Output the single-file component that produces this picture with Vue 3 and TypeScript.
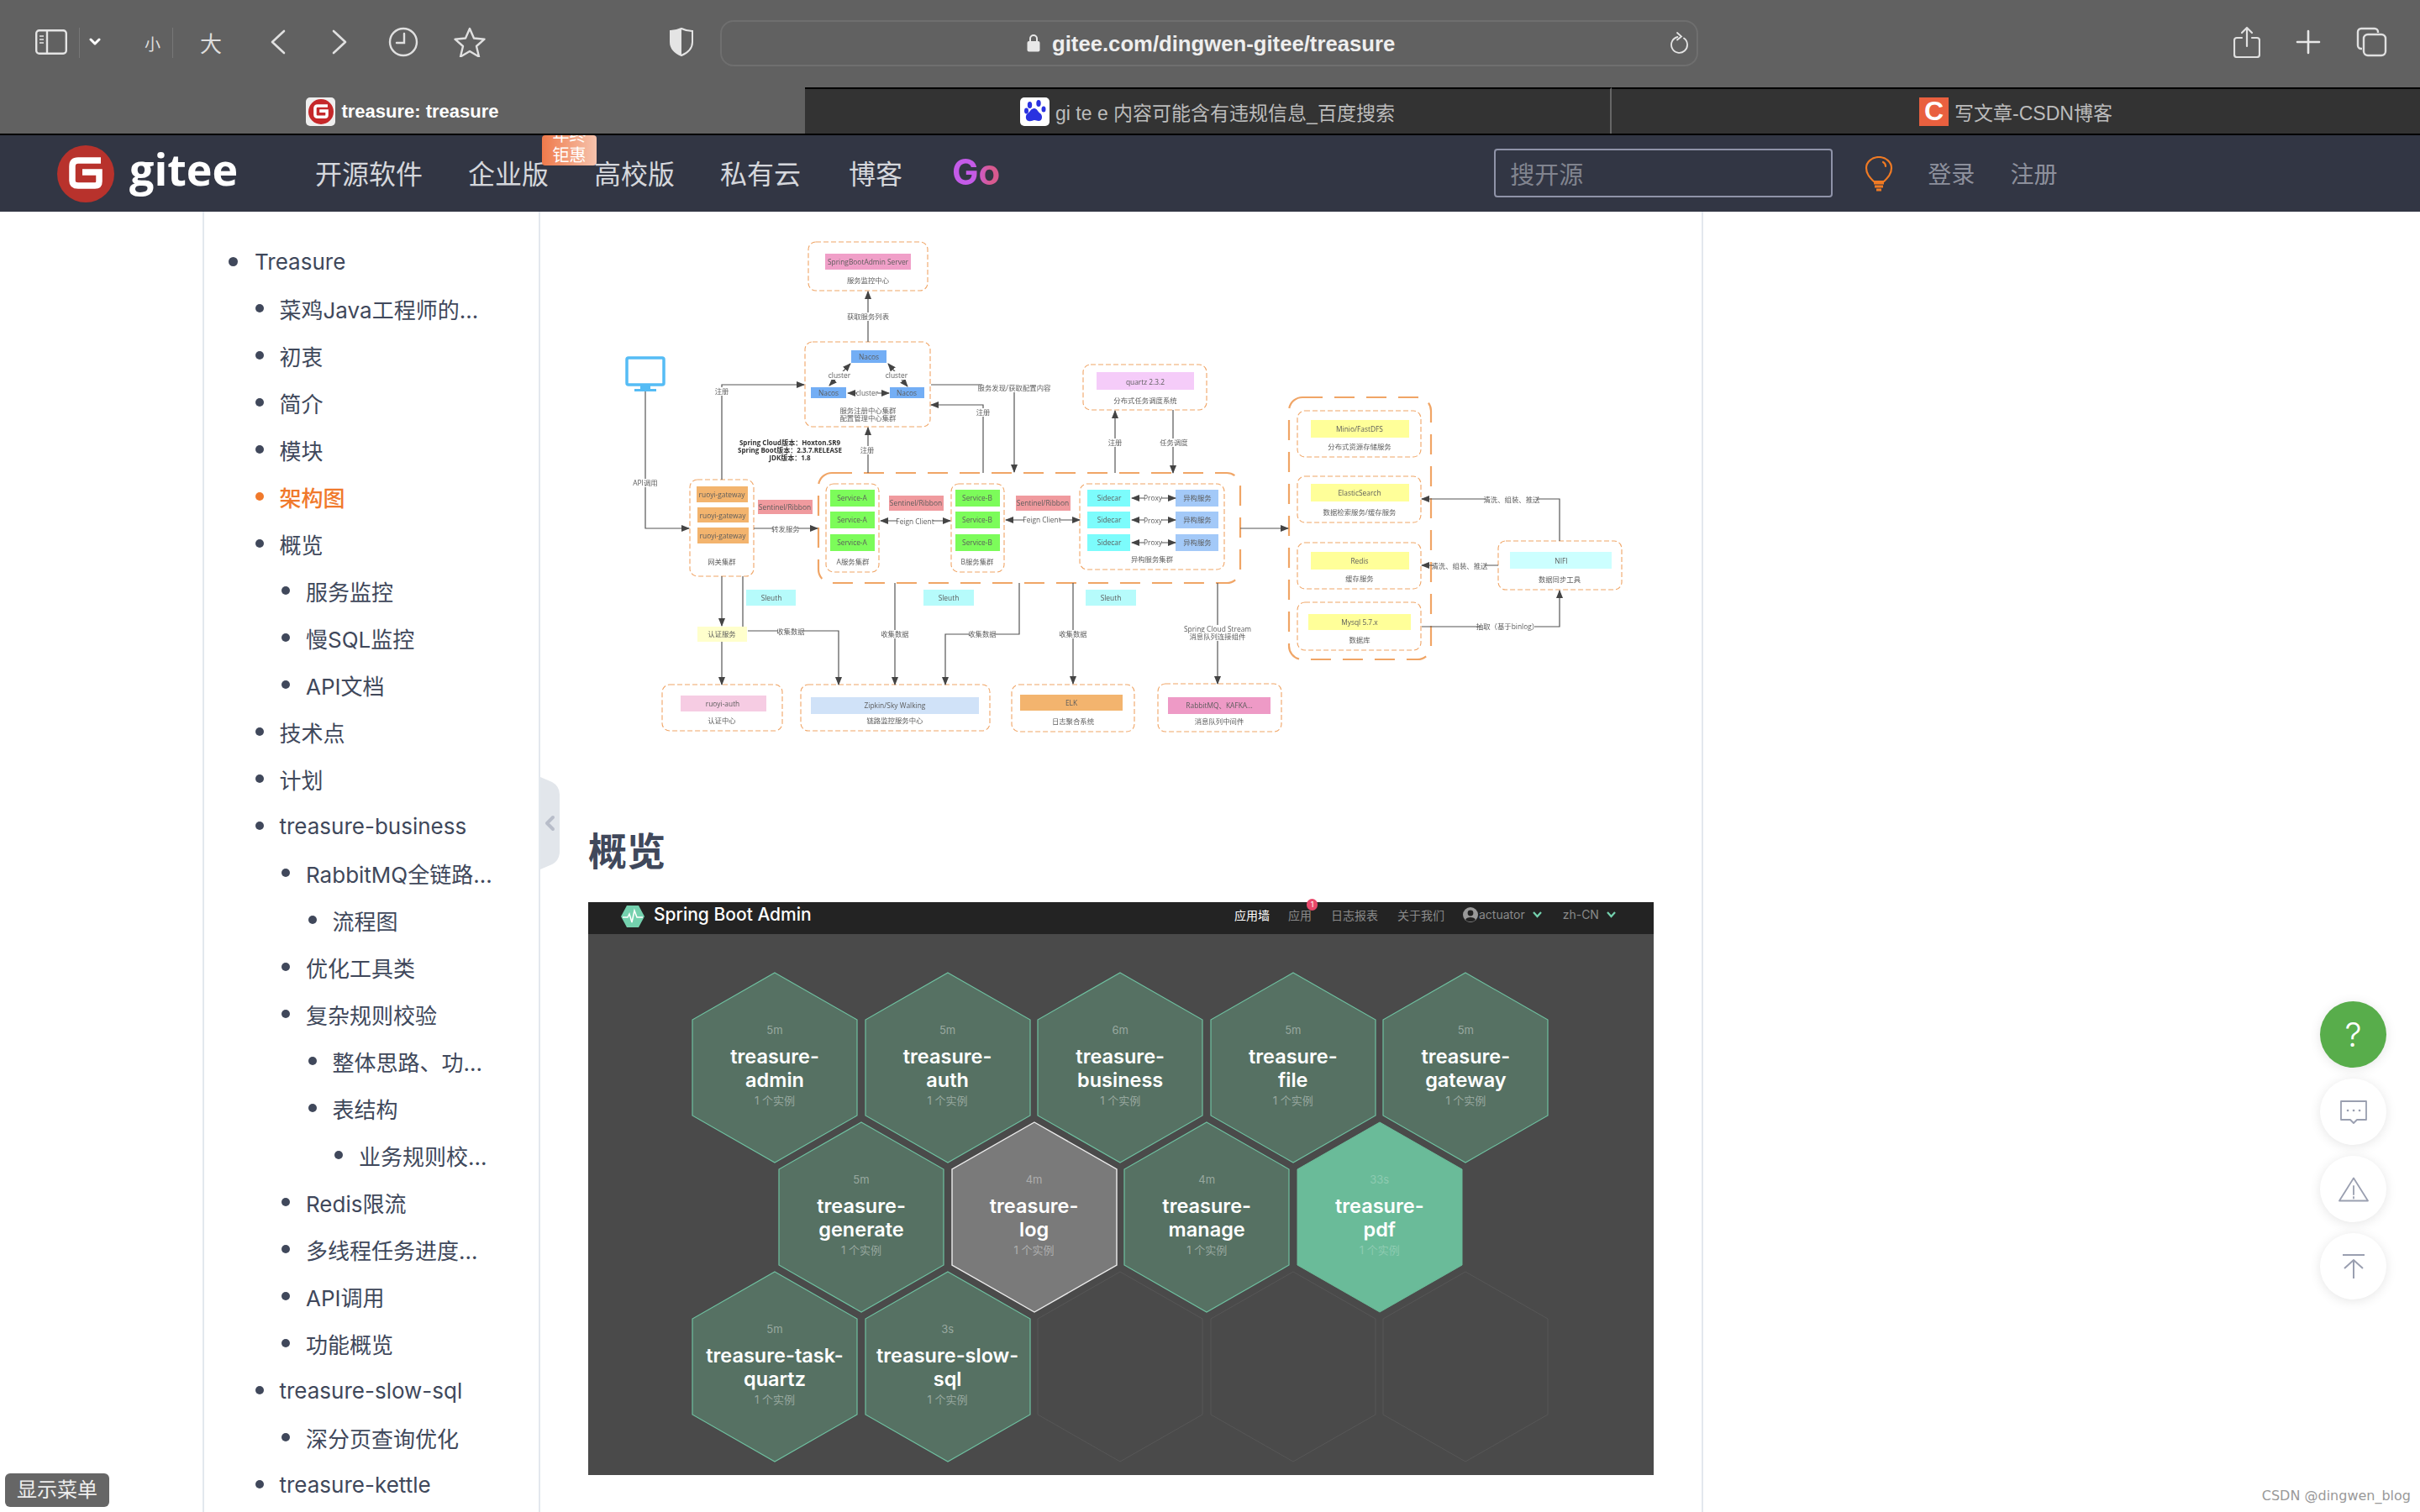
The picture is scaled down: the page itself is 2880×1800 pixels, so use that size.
<template>
  <div class="screen">
    <div class="toolbar">
      <svg class="ico" style="margin-left: 42px" width="38" height="30" viewBox="0 0 38 30" fill="none" stroke="#e4e4e4" stroke-width="2.4">
        <rect x="1.2" y="1.2" width="35.6" height="27.6" rx="3.5" />
        <path d="M14 1v28" />
        <path d="M5 8h5M5 12h5M5 16h5" stroke-width="1.6" />
      </svg>
      <span class="sep" style="margin-left: 14px"></span>
      <svg class="ico" style="margin-left: 11px" width="14" height="10" viewBox="0 0 14 10" fill="none" stroke="#fff" stroke-width="3" stroke-linecap="round" stroke-linejoin="round">
        <path d="M2 2l5 5 5-5" />
      </svg>
      <span class="zoom-small">小</span>
      <span class="sep" style="margin-left: 13px"></span>
      <span class="zoom-big">大</span>
      <svg class="ico" style="margin-left: 58px" width="18" height="30" viewBox="0 0 18 30" fill="none" stroke="#e0e0e0" stroke-width="2.6" stroke-linecap="round" stroke-linejoin="round">
        <path d="M16 2L2 15l14 13" />
      </svg>
      <svg class="ico" style="margin-left: 55px" width="18" height="30" viewBox="0 0 18 30" fill="none" stroke="#e0e0e0" stroke-width="2.6" stroke-linecap="round" stroke-linejoin="round">
        <path d="M2 2l14 13L2 28" />
      </svg>
      <svg class="ico" style="margin-left: 49px" width="36" height="36" viewBox="0 0 36 36" fill="none" stroke="#e0e0e0" stroke-width="2.4">
        <circle cx="18" cy="18" r="16" />
        <path d="M19 8v11h-9" stroke-linecap="round" />
      </svg>
      <svg class="ico" style="margin-left: 42px" width="38" height="36" viewBox="0 0 38 36" fill="none" stroke="#e0e0e0" stroke-width="2.4" stroke-linejoin="round">
        <path d="M19 2l5 11.5 12.5 1.2-9.5 8.3 3 12.5L19 29l-11 6.5 3-12.5-9.5-8.3L14 13.5z" />
      </svg>
      <svg class="ico" style="margin-left: 219px" width="28" height="34" viewBox="0 0 28 34">
        <path d="M14 1C10 3 5 4 1 4v13c0 8 6 13 13 16 7-3 13-8 13-16V4c-4 0-9-1-13-3z" fill="none" stroke="#e4e4e4" stroke-width="2" />
        <path d="M14 1C18 3 23 4 27 4v13c0 8-6 13-13 16z" fill="#e4e4e4" transform="matrix(-1 0 0 1 28 0)" />
      </svg>
      <div class="address">
        <svg class="lock" width="16" height="22" viewBox="0 0 16 22">
          <path d="M4 9V6a4 4 0 018 0v3" fill="none" stroke="#e8e8e8" stroke-width="2" />
          <rect x="0.5" y="9" width="15" height="12.5" rx="2" fill="#e8e8e8" />
        </svg>
        <span class="url">gitee.com/dingwen-gitee/treasure</span>
        <svg class="reload" width="23" height="26" viewBox="0 0 23 26" fill="none" stroke="#e4e4e4" stroke-width="1.8" stroke-linecap="round">
          <path d="M18 7.5A9.5 9.5 0 1 1 10.5 6" />
          <path d="M10 1l5 4.5-5 4" />
        </svg>
      </div>
      <svg class="ico" style="margin-left: 637px" width="32" height="38" viewBox="0 0 32 38" fill="none" stroke="#e0e0e0" stroke-width="2.2" stroke-linecap="round" stroke-linejoin="round">
        <path d="M10 14H4a3 3 0 00-3 3v17a3 3 0 003 3h24a3 3 0 003-3V17a3 3 0 00-3-3h-6" />
        <path d="M16 24V2M10 8l6-6 6 6" />
      </svg>
      <svg class="ico" style="margin-left: 42px" width="30" height="30" viewBox="0 0 30 30" stroke="#e8e8e8" stroke-width="2.6" stroke-linecap="round">
        <path d="M15 2v26M2 15h26" />
      </svg>
      <svg class="ico" style="margin-left: 42px" width="37" height="36" viewBox="0 0 37 36" fill="none" stroke="#e0e0e0" stroke-width="2.4">
        <path d="M7 26H6a4 4 0 01-4-4V6a4 4 0 014-4h16a4 4 0 014 4v1" />
        <rect x="9" y="9" width="26" height="25" rx="5" />
      </svg>
    </div>

    <div class="tabs">
      <div class="tab tab-active">
        <span class="fav fav-gitee">
          <svg width="30" height="30" viewBox="0 0 68 68">
            <circle cx="34" cy="34" r="34" fill="#c5282a" />
            <path d="M52 18H25q-7 0-7 7v17q0 6 7 6h20q5 0 5-5V32H30" fill="none" stroke="#fff" stroke-width="8" />
          </svg>
        </span>
        <span>treasure: treasure</span>
      </div>
      <div class="tab">
        <span class="fav fav-baidu">
          <svg width="30" height="30" viewBox="0 0 30 30" fill="#2a32e0">
            <ellipse cx="8.5" cy="7" rx="2.7" ry="4" />
            <ellipse cx="19" cy="5" rx="2.7" ry="4" />
            <ellipse cx="4.5" cy="14" rx="2.5" ry="3.4" />
            <ellipse cx="25" cy="12" rx="2.5" ry="3.6" />
            <path d="M14 11c3 0 4 4 7 6 3 2 3 9-2 9-2 0-3-1-5-1s-4 2-7 1c-4-1-4-7-1-9 3-2 4-6 8-6z" />
          </svg>
        </span>
        <span>gi te e 内容可能含有违规信息_百度搜索</span>
      </div>
      <div class="tab tab-last">
        <span class="fav fav-csdn">C</span>
        <span>写文章-CSDN博客</span>
      </div>
    </div>

    <header class="site-header">
      <svg class="logo" width="68" height="68" viewBox="0 0 68 68">
        <circle cx="34" cy="34" r="34" fill="#b8322c" />
        <path d="M52 18H25q-7 0-7 7v17q0 6 7 6h20q5 0 5-5V32H30" fill="none" stroke="#fff" stroke-width="7.5" />
      </svg>
      <span class="wordmark">gitee</span>
      <nav class="site-nav">
        <a>开源软件</a>
        <a class="has-badge">企业版<span class="promo"><span>年终<br />钜惠</span></span></a>
        <a>高校版</a>
        <a>私有云</a>
        <a class="blog">博客</a>
        <a class="go">Go</a>
      </nav>
      <div class="search">搜开源</div>
      <svg class="bulb" width="34" height="42" viewBox="0 0 34 42" fill="none" stroke="#ef7a24" stroke-width="2.2">
        <path d="M11 30C6 25 2 21 2 14a15 13 0 0130 0c0 7-4 11-9 16z" />
        <path d="M22 7c2 1 3 3 3 5" stroke-linecap="round" />
        <path d="M11 32h12M12 36h10M14 40h6" stroke-width="3" />
      </svg>
      <a class="auth-link" style="margin-left: 41px">登录</a>
      <a class="auth-link" style="margin-left: 42px">注册</a>
    </header>

    <div class="body-row">
      <aside class="toc">
        <ul>
          <li
            v-for="item in toc"
            :key="item.text"
            :class="{ current: item.current }"
            :style="{ paddingLeft: item.level * 31.5 + 'px' }"
          >
            <span class="dot" :class="{ 'dot-top': item.level === 0 }"></span>
            <span>{{ item.text }}</span>
          </li>
        </ul>
      </aside>

      <main class="article">
        <svg class="diagram" width="1268" height="620" viewBox="700 270 1268 620">
          <defs>
            <marker id="arr" markerWidth="10" markerHeight="8" refX="9" refY="4" orient="auto-start-reverse" markerUnits="userSpaceOnUse">
              <path d="M0 0L10 4 0 8z" fill="#444" />
            </marker>
          </defs>
          <rect
            v-for="b in dashBoxes"
            :key="'d' + b.x + b.y"
            :x="b.x" :y="b.y" :width="b.w" :height="b.h" :rx="b.heavy ? 16 : 9"
            fill="none"
            stroke="#f0a566"
            :stroke-width="b.heavy ? 2.2 : 1.1"
            :stroke-dasharray="b.heavy ? '24 14' : '6 3'"
          />
          <rect
            v-for="b in fills"
            :key="'f' + b.x + b.y"
            :x="b.x" :y="b.y" :width="b.w" :height="b.h" :fill="b.c"
          />
          <path
            v-for="l in lines"
            :key="l.d"
            :d="l.d"
            fill="none"
            stroke="#555"
            stroke-width="1.2"
            :marker-end="l.end === false ? undefined : 'url(#arr)'"
            :marker-start="l.both ? 'url(#arr)' : undefined"
          />
          <rect x="746" y="426" width="44" height="32" rx="2" fill="#fff" stroke="#55bcf5" stroke-width="3.5" />
          <path d="M762 459h12v4h7v3h-26v-3h7z" fill="#55bcf5" />
          <g v-for="t in labels" :key="t.s + t.x + t.y">
            <rect v-if="t.bg" :x="t.x - t.bg / 2" :y="t.y - 5" :width="t.bg" height="10" fill="#fff" />
            <text :x="t.x" :y="t.y + 3" class="dt" :class="{ 'dt-bold': t.bold }">{{ t.s }}</text>
          </g>
        </svg>

        <h2 class="heading">概览</h2>

        <div class="sba">
          <div class="sba-bar">
            <svg class="sba-logo" width="28" height="26" viewBox="0 0 28 26">
              <path d="M7 0h14l7 13-7 13H7L0 13z" fill="#74d1ae" />
              <path d="M2 14h6l2-4 3 10 3-14 3 8h7" fill="none" stroke="#fff" stroke-width="1.5" />
            </svg>
            <span class="sba-title">Spring Boot Admin</span>
            <span class="sba-link sba-link-on" style="margin-left: 512px">应用墙</span>
            <span class="sba-link" style="margin-left: 22px">应用<span class="sba-badge">1</span></span>
            <span class="sba-link" style="margin-left: 23px">日志报表</span>
            <span class="sba-link" style="margin-left: 23px">关于我们</span>
            <svg class="sba-user" width="18" height="18" viewBox="0 0 18 18">
              <circle cx="9" cy="9" r="9" fill="#999" />
              <circle cx="9" cy="7" r="3.4" fill="#222" />
              <path d="M3 15c1-4 11-4 12 0-3 3-9 3-12 0z" fill="#222" />
            </svg>
            <span class="sba-link">actuator</span>
            <svg class="sba-chev" width="11" height="8" viewBox="0 0 11 8" fill="none" stroke="#74d1ae" stroke-width="2.2"><path d="M1 1l4.5 5L10 1" /></svg>
            <span class="sba-link" style="margin-left: 25px">zh-CN</span>
            <svg class="sba-chev" width="11" height="8" viewBox="0 0 11 8" fill="none" stroke="#74d1ae" stroke-width="2.2"><path d="M1 1l4.5 5L10 1" /></svg>
          </div>
          <div class="wall">
            <div v-for="(row, r) in wall" :key="r" class="wall-row" :class="{ 'wall-row-shift': r === 1 }">
              <div v-for="(h, i) in row" :key="i" class="hex" :class="h.kind">
                <svg class="hex-shape" width="198" height="228" viewBox="-1 -1 198 228">
                  <polygon points="98,0 196,56 196,170 98,226 0,170 0,56" />
                </svg>
                <template v-if="h.name">
                  <span class="hex-age">{{ h.age }}</span>
                  <span class="hex-name">{{ h.name[0] }}<br />{{ h.name[1] }}</span>
                  <span class="hex-count">1 个实例</span>
                </template>
              </div>
            </div>
          </div>
        </div>
      </main>
      <div class="right-rule"></div>
    </div>

    <svg class="toc-handle" width="24" height="110" viewBox="0 0 24 110">
      <path d="M0 0l14 6q9 5 9 15v68q0 10-9 15l-14 6z" fill="#e2e6eb" />
      <path d="M15 48l-7 7 7 7" fill="none" stroke="#b8bdc9" stroke-width="4" stroke-linejoin="round" stroke-linecap="round" />
    </svg>

    <div class="float-tools">
      <div class="tool tool-help">?</div>
      <div class="tool">
        <svg width="34" height="28" viewBox="0 0 34 28" fill="none" stroke="#9a9fb0" stroke-width="1.8">
          <path d="M2 1h30v22H21l-4 4-4-4H2z" stroke-linejoin="round" />
          <path d="M10 12h.1M17 12h.1M24 12h.1" stroke-width="2.6" stroke-linecap="round" />
        </svg>
      </div>
      <div class="tool">
        <svg width="36" height="30" viewBox="0 0 36 30" fill="none" stroke="#9a9fb0" stroke-width="1.8" stroke-linejoin="round">
          <path d="M18 1.5L35 28.5H1z" />
          <path d="M18 11v10M18 24v1.5" stroke-linecap="round" />
        </svg>
      </div>
      <div class="tool">
        <svg width="28" height="30" viewBox="0 0 28 30" fill="none" stroke="#9a9fb0" stroke-width="2">
          <path d="M1 1h26M14 29V7M3 17L14 7l11 10" />
        </svg>
      </div>
    </div>

    <div class="show-menu">显示菜单</div>
    <div class="watermark">CSDN @dingwen_blog</div>
  </div>
</template>

<script setup lang="ts">
interface TocItem {
  text: string;
  level: number;
  current?: boolean;
}

interface Hex {
  kind: string;
  name?: [string, string];
  age?: string;
}

interface Rect {
  x: number;
  y: number;
  w: number;
  h: number;
  c?: string;
  heavy?: boolean;
}

const toc: TocItem[] = [
  { text: "Treasure", level: 0 },
  { text: "菜鸡Java工程师的...", level: 1 },
  { text: "初衷", level: 1 },
  { text: "简介", level: 1 },
  { text: "模块", level: 1 },
  { text: "架构图", level: 1, current: true },
  { text: "概览", level: 1 },
  { text: "服务监控", level: 2 },
  { text: "慢SQL监控", level: 2 },
  { text: "API文档", level: 2 },
  { text: "技术点", level: 1 },
  { text: "计划", level: 1 },
  { text: "treasure-business", level: 1 },
  { text: "RabbitMQ全链路...", level: 2 },
  { text: "流程图", level: 3 },
  { text: "优化工具类", level: 2 },
  { text: "复杂规则校验", level: 2 },
  { text: "整体思路、功...", level: 3 },
  { text: "表结构", level: 3 },
  { text: "业务规则校...", level: 4 },
  { text: "Redis限流", level: 2 },
  { text: "多线程任务进度...", level: 2 },
  { text: "API调用", level: 2 },
  { text: "功能概览", level: 2 },
  { text: "treasure-slow-sql", level: 1 },
  { text: "深分页查询优化", level: 2 },
  { text: "treasure-kettle", level: 1 },
];

const up = "hex-up";
const wall: Hex[][] = [
  [
    { kind: up, name: ["treasure-", "admin"], age: "5m" },
    { kind: up, name: ["treasure-", "auth"], age: "5m" },
    { kind: up, name: ["treasure-", "business"], age: "6m" },
    { kind: up, name: ["treasure-", "file"], age: "5m" },
    { kind: up, name: ["treasure-", "gateway"], age: "5m" },
  ],
  [
    { kind: up, name: ["treasure-", "generate"], age: "5m" },
    { kind: "hex-hover", name: ["treasure-", "log"], age: "4m" },
    { kind: up, name: ["treasure-", "manage"], age: "4m" },
    { kind: "hex-new", name: ["treasure-", "pdf"], age: "33s" },
  ],
  [
    { kind: up, name: ["treasure-task-", "quartz"], age: "5m" },
    { kind: up, name: ["treasure-slow-", "sql"], age: "3s" },
    { kind: "hex-empty" },
    { kind: "hex-empty" },
    { kind: "hex-empty" },
  ],
];

const box = (x: number, y: number, x2: number, y2: number, heavy = false): Rect => ({
  x,
  y,
  w: x2 - x,
  h: y2 - y,
  heavy,
});

const dashBoxes: Rect[] = [
  box(962, 288, 1104, 346),
  box(958, 407, 1107, 508),
  box(1289, 434, 1436, 488),
  box(821, 571, 897, 686),
  box(974, 563, 1476, 694, true),
  box(983, 576, 1046, 681),
  box(1132, 576, 1195, 681),
  box(1285, 576, 1457, 678),
  box(788, 815, 931, 870),
  box(953, 815, 1178, 870),
  box(1204, 815, 1350, 871),
  box(1378, 814, 1525, 871),
  box(1534, 473, 1703, 785, true),
  box(1544, 489, 1691, 544),
  box(1544, 567, 1691, 622),
  box(1544, 646, 1691, 701),
  box(1544, 717, 1691, 774),
  box(1783, 644, 1930, 702),
];

const fill = (c: string, x: number, y: number, x2: number, y2: number): Rect => ({
  c,
  x,
  y,
  w: x2 - x,
  h: y2 - y,
});

const rowYs: [number, number][] = [
  [583, 603],
  [609, 629],
  [636, 656],
];

const fills: Rect[] = [
  fill("#f09fc8", 982, 302, 1084, 321),
  fill("#73aef5", 1013, 417, 1055, 432),
  fill("#73aef5", 965, 461, 1007, 474),
  fill("#73aef5", 1059, 461, 1100, 474),
  fill("#f5ccf9", 1305, 443, 1421, 464),
  fill("#f3b46e", 829, 579, 890, 598),
  fill("#f3b46e", 830, 604, 891, 622),
  fill("#f3b46e", 830, 628, 891, 647),
  fill("#f09a9e", 902, 595, 967, 612),
  fill("#f09a9e", 1058, 590, 1123, 608),
  fill("#f09a9e", 1209, 590, 1274, 608),
  ...rowYs.map(([a, b]) => fill("#7cfc5a", 988, a, 1041, b)),
  ...rowYs.map(([a, b]) => fill("#7cfc5a", 1137, a, 1190, b)),
  ...rowYs.map(([a, b]) => fill("#7cfcfc", 1294, a, 1345, b)),
  ...rowYs.map(([a, b]) => fill("#a3c9f8", 1399, a, 1450, b)),
  fill("#b6fbfb", 888, 702, 947, 721),
  fill("#b6fbfb", 1099, 702, 1159, 721),
  fill("#b6fbfb", 1292, 702, 1352, 721),
  fill("#ffffcc", 830, 746, 889, 764),
  fill("#f6cce3", 810, 828, 912, 847),
  fill("#d0e2f8", 965, 830, 1165, 850),
  fill("#f3b46e", 1214, 827, 1336, 846),
  fill("#ee9ac6", 1390, 830, 1512, 850),
  fill("#ffff99", 1560, 500, 1677, 521),
  fill("#ffff99", 1560, 576, 1677, 597),
  fill("#ffff99", 1560, 657, 1677, 678),
  fill("#ffff99", 1557, 731, 1679, 750),
  fill("#ccffff", 1797, 657, 1918, 677),
];

const lines: { d: string; both?: boolean; end?: boolean }[] = [
  { d: "M768 466V629H820" },
  { d: "M859 571V458H957" },
  { d: "M1033 407V347" },
  { d: "M1033 563V509" },
  { d: "M1170 563V482H1108" },
  { d: "M1108 458H1207V562" },
  { d: "M1327 563V489" },
  { d: "M1396 488V563" },
  { d: "M897 629H973" },
  { d: "M1048 620H1131", both: true },
  { d: "M1197 619H1285", both: true },
  { d: "M1347 593H1399", both: true },
  { d: "M1347 619H1399", both: true },
  { d: "M1347 646H1399", both: true },
  { d: "M987 459L1012 433", both: true },
  { d: "M1057 433L1080 460", both: true },
  { d: "M1009 468H1058", both: true },
  { d: "M859 686V745" },
  { d: "M859 764V815" },
  { d: "M884 686V746", end: false },
  { d: "M890 751H998V815" },
  { d: "M1065 694V815" },
  { d: "M1213 694V755H1125V815" },
  { d: "M1277 694V814" },
  { d: "M1449 694V814" },
  { d: "M1476 629H1533" },
  { d: "M1856 644V594H1692" },
  { d: "M1783 673H1692" },
  { d: "M1692 746H1856V703" },
];

const t = (s: string, x: number, y: number, bg = 0, bold = false) => ({ s, x, y, bg, bold });

const labels = [
  t("SpringBootAdmin Server", 1033, 312),
  t("服务监控中心", 1033, 334),
  t("获取服务列表", 1033, 377, 44),
  t("Nacos", 1034, 425),
  t("Nacos", 986, 468),
  t("Nacos", 1079, 468),
  t("cluster", 999, 447, 24),
  t("cluster", 1067, 447, 24),
  t("cluster", 1032, 468, 24),
  t("服务注册中心集群", 1033, 489),
  t("配置管理中心集群", 1033, 498),
  t("注册", 859, 466, 16),
  t("服务发现/获取配置内容", 1207, 462, 76),
  t("注册", 1170, 491, 16),
  t("注册", 1032, 536, 16),
  t("注册", 1327, 527, 16),
  t("任务调度", 1397, 527, 30),
  t("quartz 2.3.2", 1363, 455),
  t("分布式任务调度系统", 1363, 477),
  t("Spring Cloud版本：Hoxton.SR9", 940, 527, 0, true),
  t("Spring Boot版本：2.3.7.RELEASE", 940, 536, 0, true),
  t("JDK版本：1.8", 940, 545, 0, true),
  t("API调用", 768, 575, 28),
  t("ruoyi-gateway", 859, 589),
  t("ruoyi-gateway", 860, 614),
  t("ruoyi-gateway", 860, 638),
  t("网关集群", 859, 669),
  t("Sentinel/Ribbon", 934, 604),
  t("Sentinel/Ribbon", 1090, 599),
  t("Sentinel/Ribbon", 1241, 599),
  t("转发服务", 935, 630, 30),
  t("Feign Client", 1089, 621, 42),
  t("Feign Client", 1240, 619, 42),
  t("Service-A", 1014, 593),
  t("Service-A", 1014, 619),
  t("Service-A", 1014, 646),
  t("A服务集群", 1015, 669),
  t("Service-B", 1163, 593),
  t("Service-B", 1163, 619),
  t("Service-B", 1163, 646),
  t("B服务集群", 1163, 669),
  t("Sidecar", 1320, 593),
  t("Sidecar", 1320, 619),
  t("Sidecar", 1320, 646),
  t("Proxy", 1372, 593, 20),
  t("Proxy", 1372, 620, 20),
  t("Proxy", 1372, 646, 20),
  t("异构服务", 1425, 593),
  t("异构服务", 1425, 619),
  t("异构服务", 1425, 646),
  t("异构服务集群", 1371, 666),
  t("Sleuth", 918, 712),
  t("Sleuth", 1129, 712),
  t("Sleuth", 1322, 712),
  t("认证服务", 859, 755),
  t("收集数据", 941, 752, 30),
  t("收集数据", 1065, 755, 30),
  t("收集数据", 1169, 755, 30),
  t("收集数据", 1277, 755, 30),
  t("Spring Cloud Stream", 1449, 749, 72),
  t("消息队列连接组件", 1449, 758, 60),
  t("ruoyi-auth", 860, 838),
  t("认证中心", 859, 858),
  t("Zipkin/Sky Walking", 1065, 840),
  t("链路监控服务中心", 1065, 858),
  t("ELK", 1275, 837),
  t("日志聚合系统", 1277, 859),
  t("RabbitMQ、KAFKA...", 1451, 840),
  t("消息队列中间件", 1451, 859),
  t("Minio/FastDFS", 1618, 511),
  t("分布式资源存储服务", 1618, 532),
  t("ElasticSearch", 1618, 587),
  t("数据检索服务/缓存服务", 1618, 610),
  t("Redis", 1618, 668),
  t("缓存服务", 1618, 689),
  t("Mysql 5.7.x", 1618, 741),
  t("数据库", 1618, 762),
  t("NIFI", 1858, 668),
  t("数据同步工具", 1856, 690),
  t("清洗、组装、推送", 1799, 595, 60),
  t("清洗、组装、推送", 1737, 674, 60),
  t("抽取（基于binlog）", 1794, 746, 64),
];
</script>

<style>
html,
body {
  margin: 0;
  background: #fff;
}
</style>

<style scoped>
.screen {
  position: relative;
  width: 2880px;
  height: 1800px;
  overflow: hidden;
  display: flex;
  flex-direction: column;
  font-family: Inter, "Noto Sans CJK SC", sans-serif;
  background: #fff;
}

.toolbar {
  height: 104px;
  flex: none;
  display: flex;
  align-items: center;
  background: #616161;
}

.ico {
  flex: none;
  position: relative;
  top: -2px;
}

.sep {
  width: 1px;
  height: 36px;
  background: #777;
  position: relative;
  top: -1px;
}

.zoom-small {
  margin-left: 52px;
  width: 20px;
  font-size: 19px;
  color: #ddd;
  position: relative;
  top: -1px;
}

.zoom-big {
  margin-left: 32px;
  width: 26px;
  font-size: 26px;
  color: #ddd;
  position: relative;
  top: -2px;
}

.address {
  margin-left: 32px;
  width: 1164px;
  height: 55px;
  box-sizing: border-box;
  border: 2px solid #6f6f6f;
  border-radius: 16px;
  display: flex;
  align-items: center;
  position: relative;
  top: -1px;
  flex: none;
}

.lock {
  margin-left: 363px;
  flex: none;
}

.url {
  margin-left: 14px;
  padding-top: 3px;
  font-family: "Liberation Sans", sans-serif;
  font-size: 25.7px;
  font-weight: 700;
  color: #eee;
  white-space: nowrap;
}

.reload {
  position: absolute;
  right: 10px;
  top: 12px;
}

.tabs {
  height: 57px;
  flex: none;
  display: flex;
  background: #333;
  box-sizing: border-box;
  border-bottom: 2px solid #000;
}

.tab {
  width: 960px;
  flex: none;
  display: flex;
  align-items: center;
  justify-content: center;
  gap: 7px;
  box-sizing: border-box;
  border-top: 2px solid #000;
  border-right: 2px solid #666;
  font-size: 23px;
  color: #bcbcbc;
  white-space: nowrap;
  font-family: "Liberation Sans", "Noto Sans CJK SC", sans-serif;
}

.tab-active {
  width: 958px;
  background: #616161;
  border-top-color: #616161;
  border-right: none;
  color: #fff;
  font-size: 22px;
  font-weight: 700;
}

.tab-last {
  flex: 1;
  border-right: none;
}

.fav {
  width: 35px;
  height: 34px;
  flex: none;
  display: flex;
  align-items: center;
  justify-content: center;
  border-radius: 5px;
}

.fav-gitee {
  background: #eee;
}

.fav-baidu {
  background: #fff;
}

.fav-csdn {
  background: #e9603f;
  border-radius: 0;
  color: #fff;
  font-size: 32px;
  font-weight: 700;
}

.site-header {
  height: 91px;
  flex: none;
  display: flex;
  align-items: center;
  background: #323644;
  padding-left: 68px;
}

.logo {
  flex: none;
}

.wordmark {
  margin-left: 18px;
  width: 129px;
  flex: none;
  font-family: "Open Sans", sans-serif;
  font-size: 52px;
  font-weight: 700;
  color: #fff;
  line-height: 1;
  position: relative;
  top: -6px;
}

.site-nav {
  margin-left: 92px;
  display: flex;
  gap: 54px;
  font-size: 32px;
  color: #d5d7dc;
  flex: none;
  position: relative;
  top: -2px;
}

.site-nav a {
  position: relative;
}

.blog {
  margin-left: 3px;
}

.promo {
  position: absolute;
  left: 88px;
  top: -21px;
  width: 65px;
  height: 36px;
  border-radius: 4px;
  overflow: hidden;
  background: linear-gradient(90deg, #ef7a4b, #f6c3ad);
  font-size: 20px;
  line-height: 24px;
  text-align: center;
  color: #fff;
  display: flex;
  align-items: flex-end;
  justify-content: center;
}

.promo span {
  flex: none;
}

.go {
  margin-left: 5px;
  font-size: 42px;
  font-weight: 700;
  line-height: 1;
  align-self: center;
  background: linear-gradient(90deg, #c45be8 45%, #d85a90 80%);
  -webkit-background-clip: text;
  background-clip: text;
  color: transparent;
}

.search {
  margin-left: 588px;
  width: 403px;
  height: 58px;
  flex: none;
  box-sizing: border-box;
  border: 2px solid #8f93a8;
  border-radius: 4px;
  padding-left: 17px;
  display: flex;
  align-items: center;
  font-size: 29px;
  color: #81848f;
  position: relative;
  top: -1px;
}

.bulb {
  margin-left: 38px;
  flex: none;
}

.auth-link {
  font-size: 28px;
  color: #8d909c;
  flex: none;
  position: relative;
  top: -1px;
}

.body-row {
  flex: 1;
  min-height: 0;
  display: flex;
  margin-left: 241px;
}

.toc {
  width: 402px;
  flex: none;
  box-sizing: border-box;
  border-left: 2px solid #e3e8ee;
  border-right: 2px solid #e3e8ee;
  padding: 31px 0 0 29px;
  overflow: hidden;
}

.toc ul {
  margin: 0;
  padding: 0;
  list-style: none;
}

.toc li {
  height: 56px;
  display: flex;
  align-items: center;
  gap: 19px;
  font-size: 26px;
  color: #40485b;
  white-space: nowrap;
}

.toc li.current {
  color: #f0792b;
  font-weight: 500;
}

.dot {
  width: 10px;
  height: 10px;
  border-radius: 50%;
  background: currentColor;
  flex: none;
}

.dot-top {
  width: 11px;
  height: 11px;
  margin-right: 1px;
}

.article {
  width: 1382px;
  flex: none;
  box-sizing: border-box;
  padding: 18px 0 0 57px;
}

.diagram {
  display: block;
  filter: blur(0.45px);
}

.dt {
  font-family: "Open Sans", "Noto Sans CJK SC", sans-serif;
  font-size: 8.4px;
  fill: #5c5c5c;
  text-anchor: middle;
}

.dt-bold {
  font-size: 8px;
  font-weight: 700;
  fill: #333;
}

.heading {
  margin: 92px 0 30px;
  height: 62px;
  line-height: 62px;
  font-size: 46px;
  font-weight: 700;
  color: #40485b;
}

.sba {
  width: 1268px;
  height: 682px;
  background: #4a4a4a;
  display: flex;
  flex-direction: column;
}

.sba-bar {
  height: 38px;
  flex: none;
  display: flex;
  align-items: center;
  background: #232323;
  padding: 0 0 9px 39px;
  box-sizing: border-box;
}

.sba-logo {
  flex: none;
  margin-top: 4px;
}

.sba-title {
  margin-left: 11px;
  width: 179px;
  font-size: 21px;
  font-weight: 500;
  color: #fff;
  white-space: nowrap;
  flex: none;
}

.sba-link {
  position: relative;
  font-size: 14px;
  color: #8a8a8a;
  white-space: nowrap;
  flex: none;
}

.sba-link-on {
  color: #fff;
}

.sba-badge {
  position: absolute;
  right: -7px;
  top: -9px;
  width: 13px;
  height: 14px;
  border-radius: 7px;
  background: #e8486a;
  color: #fff;
  font-size: 9px;
  line-height: 14px;
  text-align: center;
}

.sba-user {
  flex: none;
  margin: 0 1px 0 22px;
}

.sba-chev {
  flex: none;
  margin-left: 9px;
}

.wall {
  padding: 46px 0 0 124px;
  display: flex;
  flex-direction: column;
}

.wall-row {
  display: flex;
  gap: 9.6px;
  height: 178px;
}

.wall-row-shift {
  padding-left: 103px;
}

.hex {
  position: relative;
  width: 196px;
  height: 226px;
  flex: none;
  display: flex;
  flex-direction: column;
  align-items: center;
  justify-content: center;
  padding-bottom: 6px;
  box-sizing: border-box;
}

.hex-shape {
  position: absolute;
  left: -1px;
  top: -1px;
}

.hex-up .hex-shape polygon {
  fill: #567163;
  stroke: #6fc0a0;
  stroke-width: 1.2;
}

.hex-hover .hex-shape polygon {
  fill: #7a7a7a;
  stroke: #ececec;
  stroke-width: 1.4;
}

.hex-new .hex-shape polygon {
  fill: #6abb99;
  stroke: #6abb99;
}

.hex-empty .hex-shape polygon {
  fill: none;
  stroke: #575757;
  stroke-width: 1;
}

.hex-age,
.hex-name,
.hex-count {
  position: relative;
  text-align: center;
}

.hex-age {
  font-size: 13px;
  line-height: 18px;
  color: rgba(255, 255, 255, 0.4);
  margin-bottom: 9px;
}

.hex-name {
  font-size: 23.5px;
  font-weight: 600;
  line-height: 27.5px;
  color: #fff;
  white-space: nowrap;
}

.hex-count {
  font-size: 13px;
  line-height: 18px;
  margin-top: 2px;
  color: rgba(255, 255, 255, 0.4);
}

.hex-new .hex-age,
.hex-new .hex-count {
  color: rgba(255, 255, 255, 0.25);
}

.right-rule {
  width: 2px;
  background: #e3e8ee;
  flex: none;
}

.toc-handle {
  position: absolute;
  left: 643px;
  top: 925px;
}

.float-tools {
  position: absolute;
  left: 2761px;
  top: 1192px;
  display: flex;
  flex-direction: column;
  gap: 13px;
}

.tool {
  width: 79px;
  height: 79px;
  border-radius: 50%;
  background: #fff;
  box-shadow: 0 2px 14px rgba(0, 0, 0, 0.1);
  display: flex;
  align-items: center;
  justify-content: center;
}

.tool-help {
  background: #58ad4b;
  color: #fff;
  font-size: 40px;
  font-weight: 300;
}

.show-menu {
  position: absolute;
  left: 6px;
  top: 1754px;
  width: 124px;
  height: 40px;
  border-radius: 6px;
  background: #666;
  color: #eee;
  font-size: 24px;
  line-height: 40px;
  text-align: center;
}

.watermark {
  position: absolute;
  right: 11px;
  top: 1771px;
  font-family: "DejaVu Sans", sans-serif;
  font-size: 16px;
  color: #999;
  white-space: nowrap;
}
</style>
